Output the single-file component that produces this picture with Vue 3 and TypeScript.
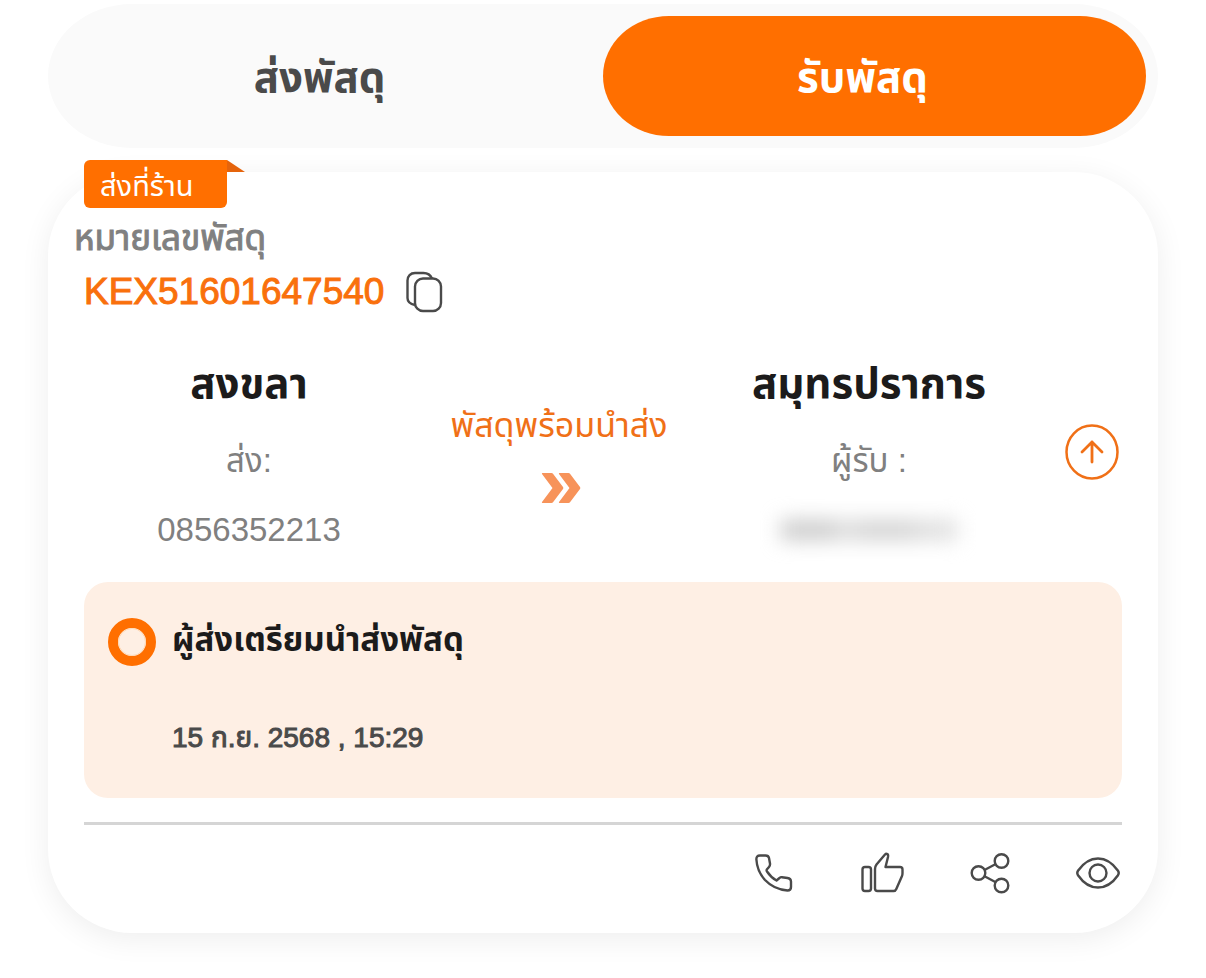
<script setup lang="ts">
import { ref } from 'vue'

interface Tab {
  id: string
  label: string
}

const tabs: Tab[] = [
  { id: 'send', label: 'ส่งพัสดุ' },
  { id: 'receive', label: 'รับพัสดุ' },
]
const activeTab = ref<string>('receive')

const parcel = {
  badge: 'ส่งที่ร้าน',
  label: 'หมายเลขพัสดุ',
  tracking: 'KEX51601647540',
  origin: 'สงขลา',
  senderLabel: 'ส่ง:',
  senderPhone: '0856352213',
  state: 'พัสดุพร้อมนำส่ง',
  destination: 'สมุทรปราการ',
  receiverLabel: 'ผู้รับ :',
  event: 'ผู้ส่งเตรียมนำส่งพัสดุ',
  time: '15 ก.ย. 2568 , 15:29',
}
</script>

<template>
  <main class="page">
    <div class="tabs" role="tablist">
      <button
        v-for="tab in tabs"
        :key="tab.id"
        type="button"
        role="tab"
        class="tab"
        :class="{ active: tab.id === activeTab }"
        :aria-selected="tab.id === activeTab"
        @click="activeTab = tab.id"
      >
        {{ tab.label }}
      </button>
    </div>

    <article class="card">
      <div class="badge">{{ parcel.badge }}</div>

      <p class="label">{{ parcel.label }}</p>
      <div class="tracking">
        <span class="number">{{ parcel.tracking }}</span>
        <button type="button" class="icon-button" aria-label="คัดลอก">
          <svg width="40" height="42" viewBox="0 0 40 42" fill="none" stroke="#4a4a4a" stroke-width="2.4">
            <rect x="11" y="7.500" width="26" height="32.500" rx="8" />
            <path d="M11 34C6 33 3.500 31 3.500 27V9.500C3.500 5 6.500 2 11 2H19.500C24 2 26.500 4 28 7.500" />
          </svg>
        </button>
      </div>

      <section class="route">
        <div class="party">
          <h2 class="city">{{ parcel.origin }}</h2>
          <p class="detail">{{ parcel.senderLabel }}</p>
          <p class="detail">{{ parcel.senderPhone }}</p>
        </div>
        <div class="state">
          <p class="state-text">{{ parcel.state }}</p>
          <svg width="44" height="32" viewBox="-4 0 44 32" fill="#f7935a" aria-hidden="true">
            <path d="M1.500 1H10.500Q11.500 1 12 1.700L22 15Q22.700 16 22 17L12 30.300Q11.500 31 10.500 31H1.500Q.500 31 1 30L11.500 16L1 2Q.500 1 1.500 1Z" />
            <path d="M18.500 1H27.500Q28.500 1 29 1.700L39 15Q39.700 16 39 17L29 30.300Q28.500 31 27.500 31H18.500Q17.500 31 18 30L28.500 16L18 2Q17.500 1 18.500 1Z" />
          </svg>
        </div>
        <div class="party">
          <h2 class="city">{{ parcel.destination }}</h2>
          <p class="detail">{{ parcel.receiverLabel }}</p>
          <div class="concealed"></div>
        </div>
        <button type="button" class="icon-button collapse" aria-label="ย่อ">
          <svg width="60" height="60" viewBox="0 0 60 60" fill="none" stroke="#f07017" stroke-linecap="round" stroke-linejoin="round">
            <ellipse cx="30" cy="29" rx="25.500" ry="26.500" stroke-width="2.500" />
            <path d="M30 39V19M20 29L30 19L40 29" stroke-width="2.800" />
          </svg>
        </button>
      </section>

      <section class="status">
        <svg class="ring" width="48" height="48" viewBox="0 0 48 48" aria-hidden="true">
          <circle cx="24" cy="24" r="19" fill="none" stroke="#ff6f00" stroke-width="10" />
          <circle cx="24" cy="24" r="13.500" fill="none" stroke="#ffd9b5" stroke-width="1" />
        </svg>
        <div class="status-body">
          <h3 class="event">{{ parcel.event }}</h3>
          <time class="time" datetime="2025-09-15T15:29">{{ parcel.time }}</time>
        </div>
      </section>

      <hr class="divider" />

      <div class="actions">
        <button type="button" class="icon-button" aria-label="โทร">
          <svg viewBox="0 0 48 48">
            <path d="M10 6.500H15.500Q18.500 6.500 19 9L20 14.500Q20.300 16.500 19 18L16.800 20.500Q16.300 21.500 17 22.500Q21 28.500 26.500 31.500L29.500 29Q30.500 28 32 28.200L37.500 29Q41 29.500 41 32.500V38Q41 41.500 37.500 41.500Q24 40.500 15 31Q7 22 6.400 10.500Q6.200 6.500 10 6.500Z" />
          </svg>
        </button>
        <button type="button" class="icon-button" aria-label="ถูกใจ">
          <svg viewBox="0 0 48 48">
            <rect x="4.500" y="18" width="8.500" height="24" rx="2.500" />
            <path d="M17 20V39.500Q17 42 19.500 42H35.500Q37.500 42 38.300 40L44 27Q44.500 26 44.500 24V20.500Q44.500 18 42 18H27.500L30 8Q30.500 5.500 29 5Q28 4.500 27 5.500L18.500 15.500Q17 17.500 17 20Z" />
          </svg>
        </button>
        <button type="button" class="icon-button" aria-label="แชร์">
          <svg viewBox="0 0 48 48">
            <circle cx="12.500" cy="24" r="6.800" />
            <circle cx="35.500" cy="12" r="6.800" />
            <circle cx="35.500" cy="36.500" r="6.800" />
            <path d="M18.500 21L29.300 15.300M18.500 27.300L29.300 33" />
          </svg>
        </button>
        <button type="button" class="icon-button" aria-label="ดู">
          <svg viewBox="0 0 48 48">
            <path d="M4 21.800Q12.500 9.500 24 9.500T44 21.800Q45.500 24 44 26.200Q35.500 38.500 24 38.500T4 26.200Q2.500 24 4 21.800Z" />
            <circle cx="24" cy="24" r="8.500" />
          </svg>
        </button>
      </div>
    </article>
  </main>
</template>

<style>
body {
  margin: 0;
  background: #fff;
}
</style>

<style scoped>
.page {
  padding: 4px 48px 44px;
  font-family: 'Liberation Sans', 'Noto Sans Thai', 'Noto Sans', sans-serif;
  color: #1c1b1b;
}

p,
h2,
h3 {
  margin: 0;
}

button {
  padding: 0;
  border: 0;
  background: none;
  font: inherit;
  color: inherit;
  cursor: pointer;
}

.tabs {
  display: grid;
  grid-template-columns: 1fr 1fr;
  height: 144px;
  padding: 12px;
  box-sizing: border-box;
  border-radius: 84px / 72px;
  background: #fafafa;
}

.tab {
  padding: 6px 24px 0 0;
  border-radius: 66px / 60px;
  font-size: 42px;
  font-weight: 700;
  color: #4a4a4a;
}

.tab.active {
  background: #ff6f00;
  color: #fff;
}

.card {
  position: relative;
  margin-top: 24px;
  padding: 44px 36px 36px;
  border-radius: 84px;
  background: #fff;
  box-shadow: 0 6px 30px rgba(0, 0, 0, 0.07);
}

.badge {
  position: absolute;
  top: -12px;
  left: 36px;
  width: 143px;
  height: 48px;
  padding-left: 16px;
  box-sizing: border-box;
  border-radius: 6px 0 6px 6px;
  background: #ff6f00;
  color: #fff;
  font-size: 29px;
  line-height: 52px;
}

.badge::after {
  content: '';
  position: absolute;
  top: 0;
  left: 100%;
  width: 18px;
  height: 12px;
  background: #e5640c;
  clip-path: polygon(0 0, 100% 100%, 0 100%);
}

.label {
  margin-left: -10px;
  font-size: 35px;
  line-height: 44px;
  color: #808080;
  -webkit-text-stroke: 1px #808080;
}

.tracking {
  display: flex;
  align-items: center;
  gap: 20px;
  height: 56px;
  margin-top: 4px;
}

.number {
  font-size: 37px;
  color: #f9700c;
  -webkit-text-stroke: 1px #f9700c;
}

.icon-button {
  display: grid;
  place-items: center;
}

.route {
  display: grid;
  grid-template-columns: 33fr 29fr 33fr 88px;
  align-items: center;
  margin-top: 32px;
}

.party {
  display: flex;
  flex-direction: column;
  align-items: center;
  gap: 21px;
}

.city {
  font-size: 42px;
  font-weight: 700;
  line-height: 64px;
}

.detail {
  font-size: 33px;
  line-height: 48px;
  color: #808080;
}

.concealed {
  width: 176px;
  height: 20px;
  margin: 14px 0;
  background: linear-gradient(90deg, #cacaca 0 28%, #e0e0e0 36%, #d2d2d2 46% 72%, #dedede 82% 100%);
  filter: blur(10px);
}

.state {
  display: flex;
  flex-direction: column;
  align-items: center;
  gap: 24px;
  white-space: nowrap;
}

.state-text {
  font-size: 34px;
  line-height: 46px;
  color: #f07017;
}

.collapse {
  justify-self: end;
}

.status {
  display: flex;
  gap: 16px;
  margin-top: 28px;
  padding: 36px 24px;
  border-radius: 24px;
  background: #feefe4;
}

.ring {
  flex: none;
}

.status-body {
  display: flex;
  flex-direction: column;
  gap: 56px;
}

.event {
  font-size: 33px;
  line-height: 44px;
}

.time {
  padding-bottom: 4px;
  font-size: 28px;
  line-height: 40px;
  color: #4a4a4a;
  -webkit-text-stroke: 1px #4a4a4a;
}

.divider {
  height: 3px;
  margin: 24px 0;
  border: 0;
  background: #d5d5d5;
}

.actions {
  display: flex;
  justify-content: flex-end;
  gap: 60px;
}

.actions svg {
  width: 48px;
  height: 48px;
  fill: none;
  stroke: #4a4a4a;
  stroke-width: 2.4;
  stroke-linejoin: round;
}
</style>
